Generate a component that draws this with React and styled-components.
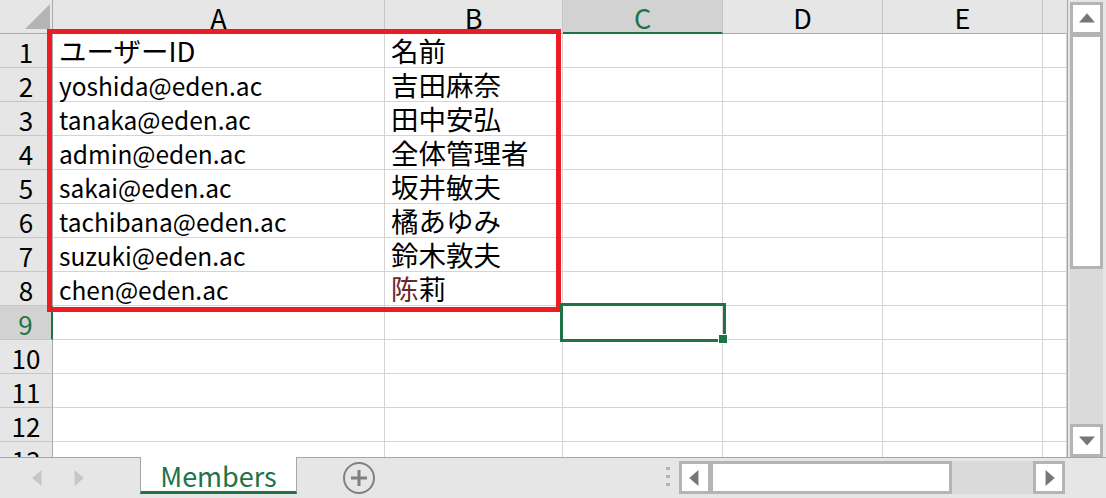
import React from 'react';
import styled, { createGlobalStyle } from 'styled-components';

const GlobalStyle = createGlobalStyle`
  html, body {
    margin: 0;
    padding: 0;
    background: #ffffff;
  }
  body {
    font-family: "Noto Sans CJK JP", "Liberation Sans", sans-serif;
  }
`;

const GREEN = '#217346';
const GRID = '#d4d4d4';
const HEAD_LINE = '#ababab';

const Window = styled.div`
  width: 1106px;
  height: 498px;
  display: flex;
  flex-direction: column;
  background: #e6e6e6;
  overflow: hidden;
`;

const Main = styled.div`
  display: flex;
  height: 457px;
`;

const Sheet = styled.div`
  position: relative;
  width: 1068px;
  height: 457px;
  overflow: hidden;
  background: #ffffff;
  border-right: 1px solid #a6a6a6;
  box-sizing: border-box;
  display: grid;
  grid-template-columns: 53px 332px 178px 160px 160px 160px 1fr;
  grid-auto-rows: 34px;
`;

const Corner = styled.div`
  background: #e6e6e6;
  border-right: 1px solid ${HEAD_LINE};
  border-bottom: 1px solid ${HEAD_LINE};
  box-sizing: border-box;
  display: flex;
  align-items: flex-end;
  justify-content: flex-end;
  padding: 0 2px 4px 0;
`;

const ColHead = styled.div`
  background: ${(p) => (p.$active ? '#d2d2d2' : '#e6e6e6')};
  color: ${(p) => (p.$active ? GREEN : '#000')};
  border-right: 1px solid ${(p) => (p.$last ? '#e6e6e6' : '#c6c6c6')};
  border-bottom: ${(p) => (p.$active ? `2px solid ${GREEN}` : `1px solid ${HEAD_LINE}`)};
  box-sizing: border-box;
  display: flex;
  align-items: center;
  justify-content: center;
  font-size: 27px;
  line-height: 30px;
  padding-top: ${(p) => (p.$active ? '3px' : '2px')};
`;

const RowHead = styled.div`
  background: ${(p) => (p.$active ? '#d2d2d2' : '#e6e6e6')};
  color: ${(p) => (p.$active ? GREEN : '#000')};
  border-right: ${(p) => (p.$active ? `2px solid ${GREEN}` : `1px solid ${HEAD_LINE}`)};
  border-bottom: 1px solid #c6c6c6;
  box-sizing: border-box;
  display: flex;
  align-items: center;
  justify-content: center;
  font-size: 26px;
  line-height: 30px;
  padding-top: 3px;
`;

const Cell = styled.div`
  border-right: 1px solid ${GRID};
  border-bottom: 1px solid ${GRID};
  box-sizing: border-box;
  display: flex;
  align-items: flex-end;
  padding: 0 0 0 ${(p) => (p.$cjk ? '6px' : '6px')};
  font-size: ${(p) => (p.$cjk ? '27.5px' : '24.5px')};
  line-height: ${(p) => (p.$cjk ? '34px' : '31px')};
  color: #000;
  white-space: nowrap;
  overflow: visible;
`;

const Odd = styled.span`
  color: #6a2828;
`;

const Highlight = styled.div`
  position: absolute;
  left: 47px;
  top: 29px;
  width: 514px;
  height: 283px;
  border: 5px solid #ed1c24;
  box-sizing: border-box;
  pointer-events: none;
`;

const Selection = styled.div`
  position: absolute;
  left: 560px;
  top: 303px;
  width: 166px;
  height: 39px;
  border: 3px solid ${GREEN};
  box-sizing: border-box;
  pointer-events: none;
`;

const Handle = styled.div`
  position: absolute;
  right: -5px;
  bottom: -5px;
  width: 8px;
  height: 8px;
  background: ${GREEN};
  border: 1px solid #ffffff;
`;

const VScroll = styled.div`
  width: 38px;
  display: flex;
  flex-direction: column;
  padding: 2px 3px 0 2px;
  box-sizing: border-box;
  background: #e6e6e6;
`;

const ScrollBtn = styled.div`
  width: ${(p) => p.$w || 33}px;
  height: ${(p) => p.$h || 33}px;
  background: #ffffff;
  border: 3px solid #b4b4b4;
  box-sizing: border-box;
  display: flex;
  align-items: center;
  justify-content: center;
  flex-shrink: 0;
`;

const VTrack = styled.div`
  flex: 1;
  background: #dadada;
  display: flex;
  flex-direction: column;
`;

const VThumb = styled.div`
  height: 234px;
  background: #ffffff;
  border: 3px solid #b4b4b4;
  border-top-width: 2px;
  box-sizing: border-box;
`;

const TabBar = styled.div`
  height: 41px;
  display: flex;
  align-items: flex-start;
  background: #e6e6e6;
  border-top: 1px solid #a6a6a6;
  box-sizing: border-box;
`;

const NavArrows = styled.div`
  width: 140px;
  height: 40px;
  display: flex;
  align-items: center;
  padding-left: 30px;
  gap: 24px;
  box-sizing: border-box;
`;

const Tab = styled.div`
  width: 157px;
  height: 37px;
  margin-top: -1px;
  background: #ffffff;
  border-left: 1px solid #a6a6a6;
  border-right: 1px solid #a6a6a6;
  border-bottom: 3px solid ${GREEN};
  box-sizing: border-box;
  display: flex;
  align-items: center;
  justify-content: center;
  color: ${GREEN};
  font-size: 27px;
  line-height: 1;
  padding-top: 2px;
`;

const AddSheet = styled.div`
  width: 120px;
  height: 40px;
  display: flex;
  align-items: center;
  padding-left: 45px;
  box-sizing: border-box;
`;

const Splitter = styled.div`
  margin-left: 243px;
  height: 40px;
  width: 16px;
  display: flex;
  flex-direction: column;
  align-items: center;
  justify-content: center;
  gap: 5px;
  padding-bottom: 4px;
  box-sizing: border-box;
`;

const Dot = styled.div`
  width: 4px;
  height: 3px;
  background: #b4b4b4;
`;

const HScroll = styled.div`
  margin-top: 3px;
  margin-left: 3px;
  width: 386px;
  height: 33px;
  display: flex;
  background: #dadada;
`;

const HThumb = styled.div`
  width: 241px;
  height: 33px;
  background: #ffffff;
  border: 3px solid #b4b4b4;
  border-left-width: 2px;
  box-sizing: border-box;
`;

const HTrack = styled.div`
  flex: 1;
`;

const Tri = ({ dir, color = '#777777', size = 14 }) => {
  const pts = {
    up: '0,10 7,2 14,10',
    down: '0,3 14,3 7,11',
    left: '10,0 10,14 2,7',
    right: '4,0 4,14 12,7',
  }[dir];
  return (
    <svg width={size} height={size} viewBox="0 0 14 14">
      <polygon points={pts} fill={color} />
    </svg>
  );
};

const cols = ['A', 'B', 'C', 'D', 'E', ''];
const data = [
  ['ユーザーID', '名前'],
  ['yoshida@eden.ac', '吉田麻奈'],
  ['tanaka@eden.ac', '田中安弘'],
  ['admin@eden.ac', '全体管理者'],
  ['sakai@eden.ac', '坂井敏夫'],
  ['tachibana@eden.ac', '橘あゆみ'],
  ['suzuki@eden.ac', '鈴木敦夫'],
  ['chen@eden.ac', <><Odd>陈</Odd>莉</>],
];

export default function App() {
  const rows = [];
  for (let r = 1; r <= 13; r++) {
    const vals = data[r - 1] || [];
    rows.push(
      <React.Fragment key={r}>
        <RowHead $active={r === 9}>{r}</RowHead>
        {cols.map((c, i) => (
          <Cell key={c + i} $cjk={i === 1 || r === 1}>
            {vals[i] || ''}
          </Cell>
        ))}
      </React.Fragment>
    );
  }

  return (
    <>
      <GlobalStyle />
      <Window>
        <Main>
          <Sheet>
            <Corner>
              <svg width="25" height="25" viewBox="0 0 25 25">
                <polygon points="25,0 25,25 0,25" fill="#b4b4b4" />
              </svg>
            </Corner>
            {cols.map((c, i) => (
              <ColHead key={c + i} $active={c === 'C'} $last={c === ''}>
                {c}
              </ColHead>
            ))}
            {rows}
            <Highlight />
            <Selection>
              <Handle />
            </Selection>
          </Sheet>
          <VScroll>
            <ScrollBtn>
              <Tri dir="up" size={16} />
            </ScrollBtn>
            <VTrack>
              <VThumb />
            </VTrack>
            <ScrollBtn>
              <Tri dir="down" size={16} />
            </ScrollBtn>
          </VScroll>
        </Main>
        <TabBar>
          <NavArrows>
            <Tri dir="left" color="#c6c6c6" size={16} />
            <Tri dir="right" color="#c6c6c6" size={16} />
          </NavArrows>
          <Tab>Members</Tab>
          <AddSheet>
            <svg width="34" height="34" viewBox="0 0 34 34">
              <circle cx="17" cy="17" r="15" fill="none" stroke="#7f7f7f" strokeWidth="2" />
              <rect x="15.5" y="9" width="3" height="16" fill="#7f7f7f" />
              <rect x="9" y="15.5" width="16" height="3" fill="#7f7f7f" />
            </svg>
          </AddSheet>
          <Splitter>
            <Dot />
            <Dot />
            <Dot />
          </Splitter>
          <HScroll>
            <ScrollBtn $w={32}>
              <Tri dir="left" size={16} />
            </ScrollBtn>
            <HThumb />
            <HTrack />
            <ScrollBtn $w={32}>
              <Tri dir="right" size={16} />
            </ScrollBtn>
          </HScroll>
        </TabBar>
      </Window>
    </>
  );
}
